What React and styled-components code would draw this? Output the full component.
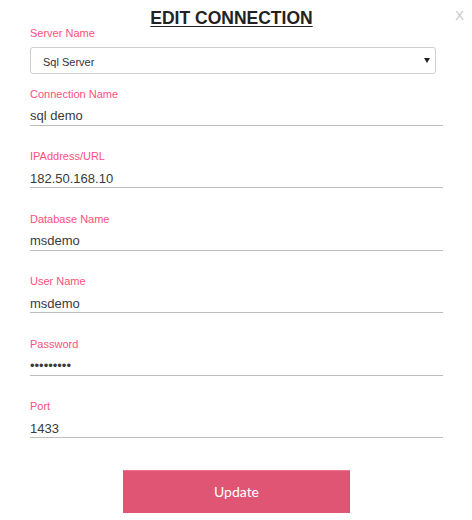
import React from "react";
import styled, { createGlobalStyle } from "styled-components";

const GlobalStyle = createGlobalStyle`
  body {
    margin: 0;
    background: #fff;
    font-family: "Liberation Sans", Arial, sans-serif;
  }
`;

const fields = [
  { label: "Connection Name", value: "sql demo" },
  { label: "IPAddress/URL", value: "182.50.168.10" },
  { label: "Database Name", value: "msdemo" },
  { label: "User Name", value: "msdemo" },
  { label: "Password", value: "123456789", type: "password" },
  { label: "Port", value: "1433" },
];

const App = () => {
  return (
    <>
      <GlobalStyle />
      <Modal>
        <Close>X</Close>
        <Title>EDIT CONNECTION</Title>
        <Label>Server Name</Label>
        <SelectWrap>
          <Select defaultValue="sql">
            <option value="sql">Sql Server</option>
            <option value="mysql">MySql</option>
          </Select>
        </SelectWrap>
        <Form>
          {fields.map((f) => (
            <Field key={f.label}>
              <Label>{f.label}</Label>
              <Input type={f.type || "text"} defaultValue={f.value} />
            </Field>
          ))}
        </Form>
        <ButtonRow>
          <Button>Update</Button>
        </ButtonRow>
      </Modal>
    </>
  );
};

const Modal = styled.div`
  position: relative;
  width: 472px;
  height: 520px;
  box-sizing: border-box;
  padding: 9px 29px 0 30px;
`;

const Close = styled.span`
  position: absolute;
  top: 8px;
  right: 8px;
  font-size: 13px;
  line-height: 15px;
  color: #c6c6c6;
  cursor: pointer;
`;

const Title = styled.h2`
  margin: 0 10px -1px 0;
  text-align: center;
  font-size: 17.5px;
  line-height: 19px;
  font-weight: bold;
  color: #222;
  text-decoration: underline;
  text-underline-offset: 2px;
`;

const Label = styled.label`
  display: block;
  font-size: 11px;
  line-height: 13px;
  color: #ff4f7d;
`;

const SelectWrap = styled.div`
  position: relative;
  width: 406px;
  margin-top: 7px;

  &::after {
    content: "";
    position: absolute;
    right: 6px;
    top: 11px;
    border-left: 3px solid transparent;
    border-right: 3px solid transparent;
    border-top: 5px solid #222;
    pointer-events: none;
  }
`;

const Select = styled.select`
  appearance: none;
  width: 100%;
  height: 27px;
  box-sizing: border-box;
  padding: 2px 0 0 12px;
  border: 1px solid #cfcfcf;
  border-radius: 3px;
  background: #fff;
  font-family: "Liberation Sans", Arial, sans-serif;
  font-size: 11px;
  color: #333;
  outline: none;
`;

const Form = styled.div`
  display: flex;
  flex-direction: column;
  gap: 24.5px;
  margin-top: 13.7px;
`;

const Field = styled.div`
  display: flex;
  flex-direction: column;
  gap: 6px;
`;

const Input = styled.input`
  height: 18px;
  padding: 0;
  border: none;
  border-bottom: 1px solid #bdbdbd;
  font-family: "Liberation Sans", Arial, sans-serif;
  font-size: 13px;
  color: #3a3a3a;
  outline: none;
  background: transparent;
`;

const ButtonRow = styled.div`
  display: flex;
  justify-content: center;
  margin-top: 32px;
`;

const Button = styled.button`
  width: 227px;
  height: 43px;
  padding-bottom: 2px;
  border: none;
  border-top: 1px solid #e8758c;
  background: #e05474;
  color: #fff;
  font-family: Lato, "Open Sans", sans-serif;
  font-size: 14px;
  cursor: pointer;
`;

export default App;
